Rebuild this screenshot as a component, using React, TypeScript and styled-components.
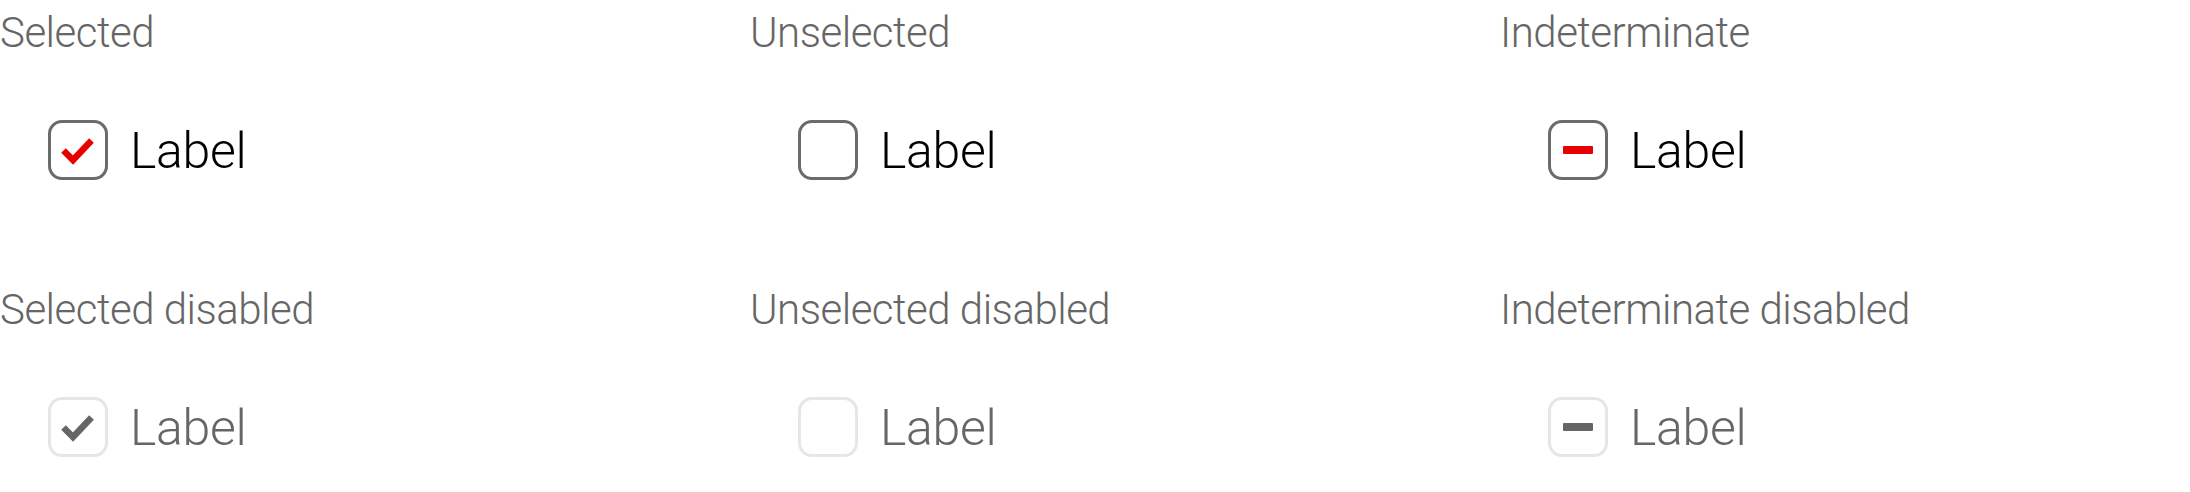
import React, { FC } from 'react'
import styled, { createGlobalStyle } from 'styled-components'

const GlobalStyle = createGlobalStyle`
    body {
        margin: 0;
        background: #ffffff;
        font-family: Roboto, "Liberation Sans", Arial, sans-serif;
        font-weight: 300;
    }
`;

const Grid = styled.div`
    display: grid;
    grid-template-columns: repeat(3, 750px);
    row-gap: 97px;
`;

const Cell = styled.div`
    display: flex;
    flex-direction: column;
`;

const Title = styled.div`
    font-size: 42px;
    line-height: 60px;
    letter-spacing: -0.5px;
    color: #666666;
    height: 60px;
    margin-top: 3px;
`;

const Row = styled.label`
    display: flex;
    align-items: center;
    gap: 22px;
    margin-top: 57px;
    padding-left: 48px;
    height: 60px;
`;

type BoxProps = { $disabled?: boolean }

const Box = styled.span<BoxProps>`
    box-sizing: border-box;
    width: 60px;
    height: 60px;
    border: 3px solid ${p => p.$disabled ? '#e6e6e6' : '#6b6b6b'};
    border-radius: 14px;
    display: flex;
    align-items: center;
    justify-content: center;
`;

const Dash = styled.span<BoxProps>`
    width: 30px;
    height: 8px;
    border-radius: 1px;
    background: ${p => p.$disabled ? '#666666' : '#e60000'};
`;

const LabelText = styled.span<BoxProps>`
    font-size: 50px;
    letter-spacing: -0.3px;
    padding-top: 2px;
    color: ${p => p.$disabled ? '#666666' : '#000000'};
`;

type State = 'checked' | 'unchecked' | 'indeterminate'

const CheckMark: FC<{ color: string }> = ({ color }) => (
    <svg width="54" height="54" viewBox="0 0 54 54" style={{ display: 'block' }}>
        <path d="M12.5 27.5 L22 37 L40.5 17.5" fill="none" stroke={color} strokeWidth="6.5" strokeLinecap="butt" strokeLinejoin="miter" />
    </svg>
)

const Checkbox: FC<{ state: State, disabled?: boolean }> = ({ state, disabled }) => {
    const mark = disabled ? '#666666' : '#e60000'
    return (
        <Row>
            <Box $disabled={disabled}>
                {state === 'checked' && <CheckMark color={mark} />}
                {state === 'indeterminate' && <Dash $disabled={disabled} />}
            </Box>
            <LabelText $disabled={disabled}>Label</LabelText>
        </Row>
    )
}

const items: { title: string, state: State, disabled?: boolean }[] = [
    { title: 'Selected', state: 'checked' },
    { title: 'Unselected', state: 'unchecked' },
    { title: 'Indeterminate', state: 'indeterminate' },
    { title: 'Selected disabled', state: 'checked', disabled: true },
    { title: 'Unselected disabled', state: 'unchecked', disabled: true },
    { title: 'Indeterminate disabled', state: 'indeterminate', disabled: true },
]

const App: FC = () => {
    return (
        <>
            <GlobalStyle />
            <Grid>
                {items.map(item => (
                    <Cell key={item.title}>
                        <Title>{item.title}</Title>
                        <Checkbox state={item.state} disabled={item.disabled} />
                    </Cell>
                ))}
            </Grid>
        </>
    )
}

export default App
